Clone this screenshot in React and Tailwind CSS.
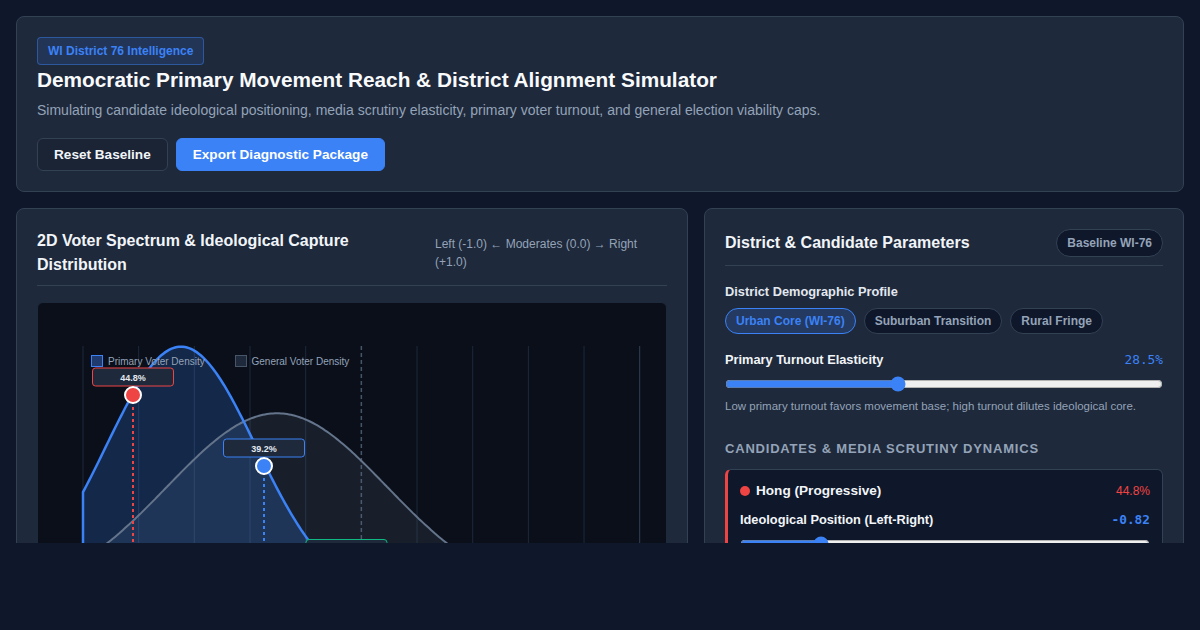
import React from 'react';

/* ── chart geometry (svg px, chart inner box) ── */
const CW = 628;
const CH = 340;
const X0 = 45;
const X1 = 601.7;
const BASE = 297;
const TOP = 43;

const gauss = (x, mu, amp, sig) => BASE - amp * Math.exp(-((x - mu) ** 2) / (2 * sig * sig));

const curve = (mu, amp, sig) => {
  const pts = [];
  for (let x = X0; x <= X1 + 0.01; x += 2) pts.push([x, gauss(x, mu, amp, sig)]);
  return pts;
};

const toPath = (pts) => pts.map(([x, y], i) => `${i ? 'L' : 'M'}${x.toFixed(1)},${y.toFixed(1)}`).join(' ');

const primary = curve(143, 253.3, 75);
const general = curve(239, 186.7, 110);

const areaPath = (pts) => `M${X0},${BASE} ` + toPath(pts).replace('M', 'L') + ` L${X1},${BASE} Z`;
const edgePath = (pts) => `M${X0},${BASE} ` + toPath(pts).replace('M', 'L');

const candidates = [
  { x: 95, y: 92, label: '44.8%', color: '#ef4444' },
  { x: 226, y: 163, label: '39.2%', color: '#3b82f6' },
  { x: 308.5, y: 263.5, label: '', color: '#10b981' },
];

const SpectrumChart = () => {
  const grid = Array.from({ length: 11 }, (_, i) => X0 + i * ((X1 - X0) / 10));
  return (
    <svg width={CW} height={CH} viewBox={`0 0 ${CW} ${CH}`} className="block">
      {grid.map((gx, i) =>
        i === 5 ? (
          <line key={i} x1={gx} y1={TOP} x2={gx} y2={BASE} stroke="#475569" strokeWidth="1.5" strokeDasharray="4 3" />
        ) : (
          <line key={i} x1={gx} y1={TOP} x2={gx} y2={BASE} stroke={i === 10 ? '#334155' : '#1e293b'} strokeWidth="1" />
        )
      )}

      <path d={areaPath(general)} fill="rgba(100,116,139,0.16)" />
      <path d={areaPath(primary)} fill="rgba(59,130,246,0.22)" />
      <path d={toPath(general)} fill="none" stroke="#64748b" strokeWidth="2" />
      <path d={edgePath(primary)} fill="none" stroke="#3b82f6" strokeWidth="2.5" />

      {/* legend */}
      <rect x="53.5" y="52.5" width="11" height="11" fill="#1e3a6e" stroke="#3b82f6" strokeWidth="1" />
      <text x="70" y="61.5" fontSize="10" fill="#94a3b8" fontFamily="Liberation Sans, Arial, sans-serif">Primary Voter Density</text>
      <rect x="197.5" y="52.5" width="11" height="11" fill="#1e293b" stroke="#475569" strokeWidth="1" />
      <text x="213.5" y="61.5" fontSize="10" fill="#94a3b8" fontFamily="Liberation Sans, Arial, sans-serif">General Voter Density</text>

      {candidates.map((c, i) => (
        <g key={i}>
          <line x1={c.x} y1={c.y} x2={c.x} y2={BASE} stroke={c.color} strokeWidth="2" strokeDasharray="3 3" />
          <rect x={c.x - 40.5} y={c.y - 27} width="81" height="18" rx="3" fill="#1e293b" stroke={c.color} strokeWidth="1" />
          {c.label && (
            <text x={c.x} y={c.y - 14.5} textAnchor="middle" fontSize="9" fontWeight="700" fill="#e2e8f0" fontFamily="Liberation Sans, Arial, sans-serif">
              {c.label}
            </text>
          )}
          <circle cx={c.x} cy={c.y} r="8" fill={c.color} stroke="#ffffff" strokeWidth="2" />
        </g>
      ))}
    </svg>
  );
};

const App = () => {
  return (
    <div className="min-h-screen bg-[#0f172a] font-['Liberation_Sans',Arial,sans-serif] text-[#f1f5f9]">
      <div className="h-[543px] overflow-hidden p-4">

        {/* ══════════════ HEADER ══════════════ */}
        <header className="rounded-lg border border-[#334155] bg-[#1e293b] p-5">
          <span className="inline-block rounded border border-[rgba(59,130,246,0.45)] bg-[rgba(59,130,246,0.15)] px-2.5 py-[6px] text-[12px] font-bold leading-[14px] text-[#3b82f6]">
            WI District 76 Intelligence
          </span>
          <h1 className="mt-[1px] text-[20.8px] font-bold leading-[28px] text-[#f8fafc]">
            Democratic Primary Movement Reach &amp; District Alignment Simulator
          </h1>
          <p className="mt-[6px] text-[14px] leading-[20px] text-[#94a3b8]">
            Simulating candidate ideological positioning, media scrutiny elasticity, primary voter turnout, and general election viability caps.
          </p>
          <div className="mt-[18px] flex gap-2">
            <button className="rounded-md border border-[#334155] bg-[#1b2435] px-4 py-[8px] text-[13.6px] font-bold leading-[15px] text-[#f1f5f9]">
              Reset Baseline
            </button>
            <button className="rounded-md border border-[#3b82f6] bg-[#3b82f6] px-4 py-[8px] text-[13.6px] font-bold leading-[15px] text-white">
              Export Diagnostic Package
            </button>
          </div>
        </header>

        <div className="mt-4 grid grid-cols-[672px_480px] gap-4">

          {/* ══════════════ SPECTRUM PANEL ══════════════ */}
          <section className="rounded-lg border border-[#334155] bg-[#1e293b] p-5">
            <div className="flex items-center justify-between border-b border-[#334155] pb-2">
              <h2 className="w-[360px] text-[16px] font-bold leading-6 text-[#f1f5f9]">
                2D Voter Spectrum &amp; Ideological Capture Distribution
              </h2>
              <p className="w-[232px] text-[12px] leading-[18px] text-[#94a3b8]">
                Left (-1.0) ← Moderates (0.0) → Right (+1.0)
              </p>
            </div>
            <div className="mt-4 h-[340px] overflow-hidden rounded-md border border-[#1e293b] bg-[#0a0f1a]">
              <SpectrumChart />
            </div>
          </section>

          {/* ══════════════ PARAMETERS PANEL ══════════════ */}
          <section className="rounded-lg border border-[#334155] bg-[#1e293b] p-5">
            <div className="flex items-center justify-between border-b border-[#334155] pb-2">
              <h2 className="text-[16px] font-bold leading-6 text-[#f1f5f9]">District &amp; Candidate Parameters</h2>
              <span className="rounded-full border border-[#334155] bg-[#0f172a] px-2.5 py-[6px] text-[12px] font-bold leading-[14px] text-[#94a3b8]">
                Baseline WI-76
              </span>
            </div>

            <div className="mt-4 text-[12.8px] font-bold leading-[19px] text-[#e2e8f0]">District Demographic Profile</div>
            <div className="mt-[7px] flex gap-2">
              <button className="rounded-full border border-[#3b82f6] bg-[rgba(59,130,246,0.2)] px-2.5 py-1 text-[12px] font-bold leading-4 text-[#3b82f6]">
                Urban Core (WI-76)
              </button>
              <button className="rounded-full border border-[#334155] bg-[#0f172a] px-2.5 py-1 text-[12px] font-bold leading-4 text-[#94a3b8]">
                Suburban Transition
              </button>
              <button className="rounded-full border border-[#334155] bg-[#0f172a] px-2.5 py-1 text-[12px] font-bold leading-4 text-[#94a3b8]">
                Rural Fringe
              </button>
            </div>

            <div className="mt-4 flex items-center justify-between leading-[19px]">
              <span className="text-[12.8px] font-bold text-[#f1f5f9]">Primary Turnout Elasticity</span>
              <span className="font-['DejaVu_Sans_Mono',monospace] text-[12.8px] text-[#3b82f6]">28.5%</span>
            </div>
            <input type="range" min="0" max="100" defaultValue="39" className="mt-[7px] block w-full accent-[#3b82f6]" />
            <p className="mt-1.5 text-[11.5px] leading-[17px] text-[#94a3b8]">
              Low primary turnout favors movement base; high turnout dilutes ideological core.
            </p>

            <h3 className="mt-6 text-[13px] font-bold uppercase leading-[19.5px] tracking-[0.8px] text-[#94a3b8]">
              Candidates &amp; Media Scrutiny Dynamics
            </h3>

            <div className="mt-2.5 rounded-md border border-l-[3px] border-[#334155] border-l-[#ef4444] bg-[#0f172a] p-3">
              <div className="flex items-center justify-between">
                <div className="flex items-center gap-1.5">
                  <span className="h-2.5 w-2.5 rounded-full bg-[#ef4444]" />
                  <span className="text-[13.6px] font-bold leading-[17px] text-[#f1f5f9]">Hong (Progressive)</span>
                </div>
                <span className="text-[12px] text-[#ef4444]">44.8%</span>
              </div>
              <div className="mt-2.5 flex items-center justify-between leading-[19px]">
                <span className="text-[12.8px] font-bold text-[#f1f5f9]">Ideological Position (Left-Right)</span>
                <span className="font-['DejaVu_Sans_Mono',monospace] text-[12.8px] font-bold text-[#3b82f6]">-0.82</span>
              </div>
              <input type="range" min="-1.3" max="1.3" step="0.01" defaultValue="-0.82" className="mt-[7px] block w-full accent-[#3b82f6]" />
            </div>
          </section>
        </div>
      </div>
    </div>
  );
};

export default App;
